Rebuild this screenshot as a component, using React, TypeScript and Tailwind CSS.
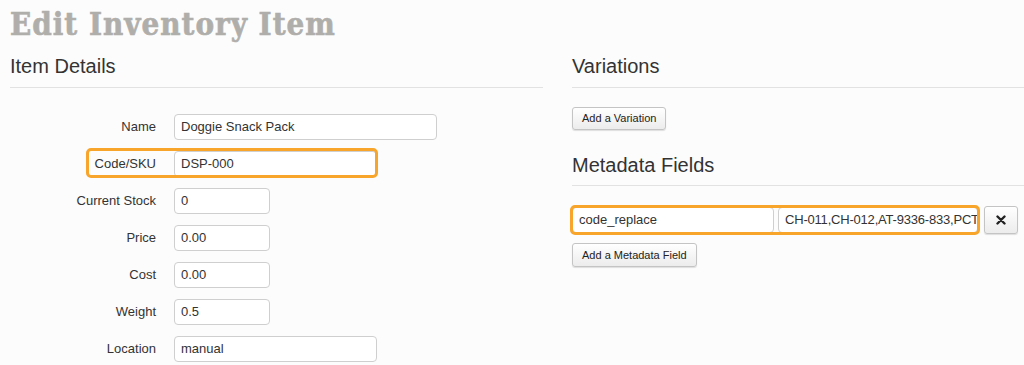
import React from "react";

const labelCls = "w-[146px] text-right text-[13px] text-[#333]";
const inputCls =
  "h-[26px] rounded-[4px] border border-[#cfcfcf] bg-white px-[6px] flex items-center text-[13px] text-[#333]";

function Row({ label, value, w }: { label: string; value: string; w: string }) {
  return (
    <div className="flex items-center gap-[18px]">
      <div className={labelCls}>{label}</div>
      <div className={`${inputCls} ${w}`}>{value}</div>
    </div>
  );
}

export default function App() {
  return (
    <div
      className="w-[1024px] h-[365px] overflow-hidden bg-[#fcfcfc] text-[#333]"
      style={{ fontFamily: '"Liberation Sans", Arial, sans-serif' }}
    >
      <h1
        className="pl-[10px] pt-[4px] h-[46px] text-[31px] leading-[40px] font-bold tracking-[1px] text-[#b0aeab]"
        style={{ fontFamily: '"DejaVu Serif Condensed", "DejaVu Serif", serif', WebkitTextStroke: "0.6px #b0aeab" }}
      >
        Edit Inventory Item
      </h1>
      <div className="flex gap-[29px] px-[10px]">
        {/* Left column */}
        <div className="w-[533px]">
          <h2 className="text-[20px] leading-[24px] pt-[8px] pb-[9px] border-b border-[#e2e2e2]">Item Details</h2>
          <div className="relative mt-[26px] flex flex-col gap-[11px]">
            <Row label="Name" value="Doggie Snack Pack" w="w-[263px]" />
            <Row label="Code/SKU" value="DSP-000" w="w-[203px]" />
            <Row label="Current Stock" value="0" w="w-[96px]" />
            <Row label="Price" value="0.00" w="w-[96px]" />
            <Row label="Cost" value="0.00" w="w-[96px]" />
            <Row label="Weight" value="0.5" w="w-[96px]" />
            <Row label="Location" value="manual" w="w-[203px]" />
            <div className="absolute left-[76px] top-[34px] w-[292px] h-[30px] rounded-[5px] border-[3px] border-[#f8a52b]" />
          </div>
        </div>
        {/* Right column */}
        <div className="flex-1 -mr-[10px]">
          <h2 className="text-[20px] leading-[24px] pt-[8px] pb-[9px] border-b border-[#e2e2e2]">Variations</h2>
          <button className="mt-[19px] h-[23px] px-[9px] rounded-[3px] border border-[#c4c4c4] bg-gradient-to-b from-white to-[#ececec] text-[11px] text-[#222] shadow-[0_1px_1px_rgba(0,0,0,0.12)]">
            Add a Variation
          </button>
          <h2 className="mt-[23px] text-[20px] leading-[24px] pb-[8px] border-b border-[#e2e2e2]">Metadata Fields</h2>
          <div className="mt-[19px] flex items-center gap-[4px]">
            <div className="relative flex gap-[4px] p-[2px] -ml-[2px]">
              <div className={`${inputCls} w-[202px] rounded-[3px]`}>code_replace</div>
              <div className={`${inputCls} w-[200px] rounded-[3px] overflow-hidden whitespace-nowrap tracking-[-0.2px]`}>CH-011,CH-012,AT-9336-833,PCT-</div>
              <div className="absolute inset-0 rounded-[5px] border-[3px] border-[#f8a52b]" />
            </div>
            <button className="h-[28px] w-[34px] rounded-[3px] border border-[#c4c4c4] bg-gradient-to-b from-white to-[#ececec] flex items-center justify-center shadow-[0_1px_1px_rgba(0,0,0,0.12)]">
              <svg width="10" height="10" viewBox="0 0 10 10">
                <path d="M1.5 1.5 L8.5 8.5 M8.5 1.5 L1.5 8.5" stroke="#222" strokeWidth="2.4" strokeLinecap="round" />
              </svg>
            </button>
          </div>
          <button className="mt-[8px] h-[24px] px-[9px] rounded-[3px] border border-[#c4c4c4] bg-gradient-to-b from-white to-[#ececec] text-[11px] text-[#222] shadow-[0_1px_1px_rgba(0,0,0,0.12)]">
            Add a Metadata Field
          </button>
        </div>
      </div>
    </div>
  );
}
